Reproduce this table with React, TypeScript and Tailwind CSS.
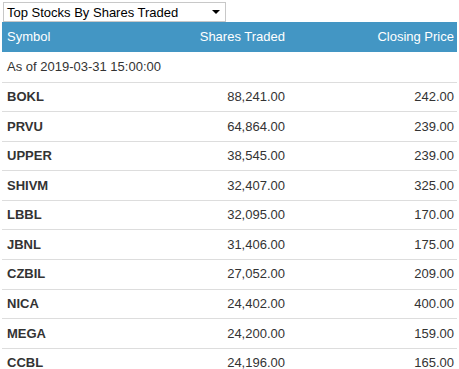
import React from "react";

const rows: [string, string, string][] = [
  ["BOKL", "88,241.00", "242.00"],
  ["PRVU", "64,864.00", "239.00"],
  ["UPPER", "38,545.00", "239.00"],
  ["SHIVM", "32,407.00", "325.00"],
  ["LBBL", "32,095.00", "170.00"],
  ["JBNL", "31,406.00", "175.00"],
  ["CZBIL", "27,052.00", "209.00"],
  ["NICA", "24,402.00", "400.00"],
  ["MEGA", "24,200.00", "159.00"],
  ["CCBL", "24,196.00", "165.00"],
];

export default function App() {
  return (
    <div
      className="w-[459px] h-[369px] overflow-hidden bg-white px-[2px] pt-[2px] text-[13px] text-[#333]"
      style={{ fontFamily: '"Liberation Sans", Arial, sans-serif' }}
    >
      {/* Report picker */}
      <div className="ml-px flex h-[20px] w-[223px] items-center justify-between border border-[#c8c8c8] bg-white pl-[3px] pr-[5px] text-black">
        <span className="leading-none">Top Stocks By Shares Traded</span>
        <span className="h-0 w-0 border-x-[4px] border-t-[4px] border-x-transparent border-t-black" />
      </div>

      {/* Table */}
      <div className="w-[455px]">
        <div className="flex h-[30px] items-center bg-[#4396c4] text-white">
          <div className="w-[186px] shrink-0 pl-[5px]">Symbol</div>
          <div className="w-[100px] shrink-0 whitespace-nowrap pr-[3px] text-right">Shares Traded</div>
          <div className="flex-1 whitespace-nowrap pr-[3px] text-right">Closing Price</div>
        </div>
        <div className="flex h-[29.57px] items-center pl-[5px]">As of 2019-03-31 15:00:00</div>
        {rows.map(([sym, shares, price]) => (
          <div key={sym} className="flex h-[29.57px] items-center border-t border-[#ddd]">
            <div className="w-[186px] shrink-0 pl-[5px] font-bold">{sym}</div>
            <div className="w-[100px] shrink-0 pr-[3px] text-right">{shares}</div>
            <div className="flex-1 pr-[3px] text-right">{price}</div>
          </div>
        ))}
      </div>
    </div>
  );
}
